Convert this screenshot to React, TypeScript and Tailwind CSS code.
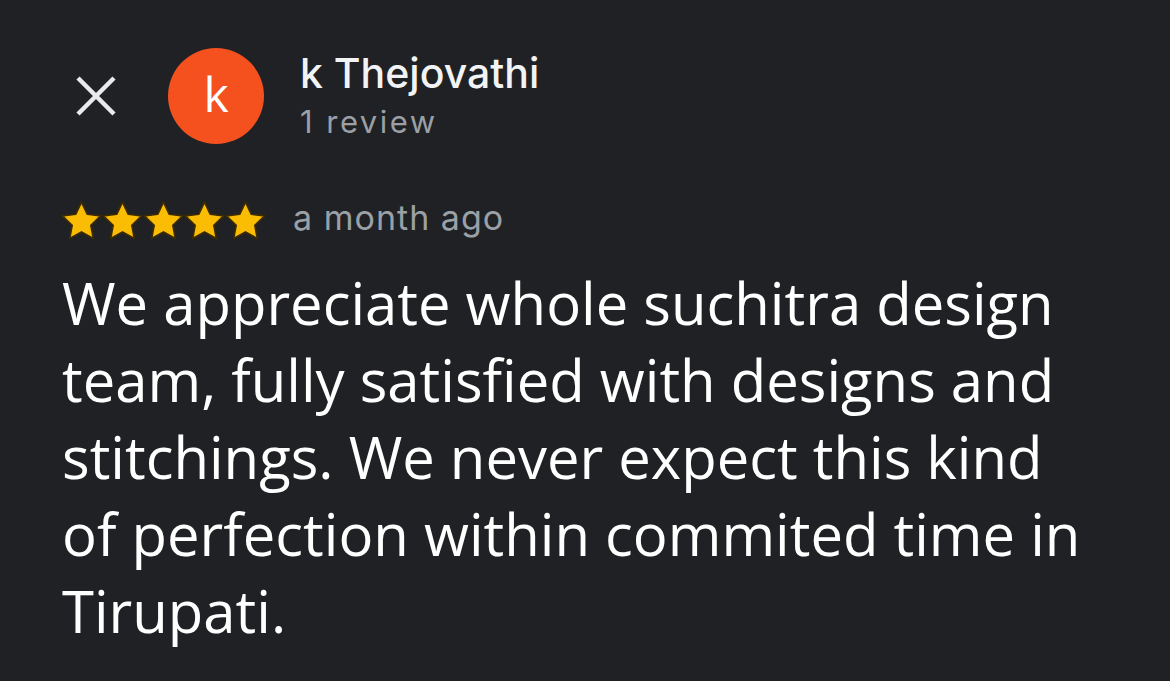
import React from "react";

function Star() {
  return (
    <svg width="41" height="39" viewBox="2.2 2.3 19.6 18.8" className="shrink-0">
      <path
        d="M12 2.8l2.8 5.9 6.4.8-4.7 4.5 1.2 6.4L12 17.2l-5.7 3.2 1.2-6.4-4.7-4.5 6.4-.8z"
        fill="#fbbc04"
        stroke="#3d2c00"
        strokeWidth="0.8"
        strokeLinejoin="round"
      />
    </svg>
  );
}

export default function App() {
  return (
    <div
      className="w-[1170px] h-[681px] bg-[#202124] overflow-hidden text-white"
      style={{ fontFamily: '"Open Sans", Roboto, sans-serif' }}
    >
      <div className="flex items-center h-[96px] mt-[48px]">
        <div className="ml-[75px] w-[42px] h-[42px] flex items-center justify-center">
          <svg width="42" height="42" viewBox="0 0 42 42">
            <path d="M3 3L39 39M39 3L3 39" stroke="#e8eaed" strokeWidth="4.5" strokeLinecap="butt" />
          </svg>
        </div>
        <div className="ml-[51px] w-[96px] h-[96px] rounded-full bg-[#f4511e] flex items-center justify-center text-[48px] text-white leading-none pb-[4px]">
          k
        </div>
        <div className="ml-[36px] flex flex-col self-start mt-[3px]" style={{ fontFamily: "Inter, sans-serif" }}>
          <div className="text-[41px] font-medium leading-[44px] text-[#f1f3f4]">k Thejovathi</div>
          <div className="text-[31px] tracking-[0.08em] leading-[38px] mt-[8px] text-[#9aa0a6]">1 review</div>
        </div>
      </div>
      <div className="flex items-center mt-[52px] h-[48px] ml-[61px]">
        <div className="flex gap-0">
          <Star />
          <Star />
          <Star />
          <Star />
          <Star />
        </div>
        <div
          className="ml-[27px] text-[34px] tracking-[0.03em] text-[#9aa0a6] leading-[40px] mt-[-4px]"
          style={{ fontFamily: "Inter, sans-serif" }}
        >
          a month ago
        </div>
      </div>
      <div className="ml-[62px] mt-[20px] text-[58px] leading-[77px] text-white whitespace-nowrap">
        We appreciate whole suchitra design
        <br />
        team, fully satisfied with designs and
        <br />
        stitchings. We never expect this kind
        <br />
        of perfection within commited time in
        <br />
        Tirupati.
      </div>
    </div>
  );
}
